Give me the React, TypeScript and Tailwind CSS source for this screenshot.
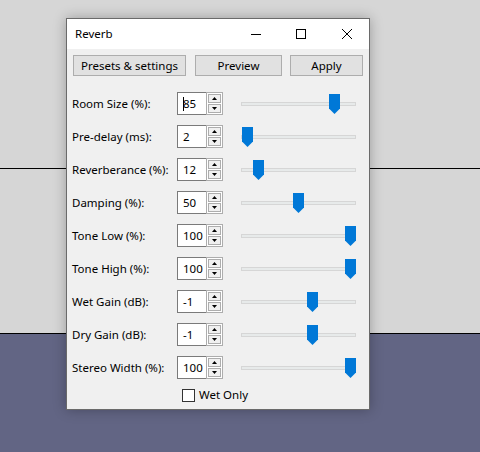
import React from "react";

type Row = { label: string; value: string; pos: number; caret?: boolean };

const rows: Row[] = [
  { label: "Room Size (%):", value: "85", pos: 88, caret: true },
  { label: "Pre-delay (ms):", value: "2", pos: 1 },
  { label: "Reverberance (%):", value: "12", pos: 12 },
  { label: "Damping (%):", value: "50", pos: 52 },
  { label: "Tone Low (%):", value: "100", pos: 104 },
  { label: "Tone High (%):", value: "100", pos: 104 },
  { label: "Wet Gain (dB):", value: "-1", pos: 66 },
  { label: "Dry Gain (dB):", value: "-1", pos: 66 },
  { label: "Stereo Width (%):", value: "100", pos: 104 },
];

function SpinBox({ value, caret }: { value: string; caret?: boolean }) {
  return (
    <div className="flex h-[23px]">
      <div className="relative flex h-full w-[29px] items-center border border-[#7a7a7a] border-r-0 bg-white pl-[5px] text-[11.5px] text-black">
        {caret && <div className="absolute left-[5px] top-[4px] h-[14px] w-px bg-black" />}
        {value}
      </div>
      <div className="flex h-full w-[17px] flex-col gap-px border border-[#adadad] bg-white p-px">
        <div className="flex flex-1 items-center justify-center border border-[#adadad] bg-[#f0f0f0]">
          <svg width="5" height="3" viewBox="0 0 5 3">
            <path d="M2.5 0 L5 3 L0 3 Z" fill="#000" />
          </svg>
        </div>
        <div className="flex flex-1 items-center justify-center border border-[#adadad] bg-[#f0f0f0]">
          <svg width="5" height="3" viewBox="0 0 5 3">
            <path d="M0 0 L5 0 L2.5 3 Z" fill="#000" />
          </svg>
        </div>
      </div>
    </div>
  );
}

function Slider({ pos }: { pos: number }) {
  return (
    <div className="relative h-[23px] w-[115px]">
      <div className="absolute left-0 right-0 top-[10px] h-[4px] border border-[#d6d6d6] bg-[#e7eaea]" />
      <svg
        className="absolute top-[2px]"
        style={{ left: pos }}
        width="11"
        height="20"
        viewBox="0 0 11 20"
      >
        <path d="M0 0 H11 V14.5 L5.5 20 L0 14.5 Z" fill="#0078d7" />
      </svg>
    </div>
  );
}

export default function App() {
  return (
    <div
      className="relative h-[452px] w-[480px] overflow-hidden bg-[#d6d6d6]"
      style={{ fontFamily: '"Noto Sans", "Segoe UI", sans-serif' }}
    >
      {/* desktop background */}
      <div className="flex h-full flex-col">
        <div className="h-[168px]" />
        <div className="h-px bg-black" />
        <div className="h-[164px]" />
        <div className="h-px bg-black" />
        <div className="flex-1 bg-[#626584]" />
      </div>

      {/* dialog window */}
      <div className="absolute left-[66px] top-[18px] flex h-[392px] w-[304px] flex-col border border-[#6a6a6a] bg-[#f0f0f0] shadow-[0_0_12px_rgba(0,0,0,0.28)]">
        <div className="flex h-[30px] items-center bg-white pl-[8px] text-[11.5px] text-black">
          <span className="flex-1">Reverb</span>
          <svg className="mr-[35px]" width="10" height="10" viewBox="0 0 10 10">
            <path d="M0 5.5 H10" stroke="#000" strokeWidth="1" />
          </svg>
          <svg className="mr-[36px]" width="10" height="10" viewBox="0 0 10 10">
            <rect x="0.5" y="0.5" width="9" height="9" fill="none" stroke="#000" strokeWidth="1" />
          </svg>
          <svg className="mr-[17px]" width="10" height="10" viewBox="0 0 10 10">
            <path d="M0 0 L10 10 M10 0 L0 10" stroke="#000" strokeWidth="1" />
          </svg>
        </div>

        <div className="mt-[6px] flex gap-[9px] px-[6px]">
          <button className="h-[21px] w-[113px] border border-[#adadad] bg-[#e1e1e1] text-[11.5px] text-black">
            Presets &amp; settings
          </button>
          <button className="h-[21px] w-[87px] border border-[#adadad] bg-[#e1e1e1] text-[11.5px] text-black">
            Preview
          </button>
          <button className="ml-[-1px] h-[21px] w-[73px] border border-[#adadad] bg-[#e1e1e1] text-[11.5px] text-black">
            Apply
          </button>
        </div>

        <div className="mt-[11px] flex flex-col pl-[5px]">
          {rows.map((r) => (
            <div key={r.label} className="flex h-[33px] items-center">
              <div className="w-[105px] text-[11.5px] text-black">{r.label}</div>
              <SpinBox value={r.value} caret={r.caret} />
              <div className="ml-[18px]">
                <Slider pos={r.pos} />
              </div>
            </div>
          ))}
        </div>

        <div className="flex h-[22px] items-center pl-[115px]">
          <div className="h-[13px] w-[13px] border border-[#333] bg-white" />
          <span className="ml-[4px] text-[11.5px] text-black">Wet Only</span>
        </div>
      </div>
    </div>
  );
}
